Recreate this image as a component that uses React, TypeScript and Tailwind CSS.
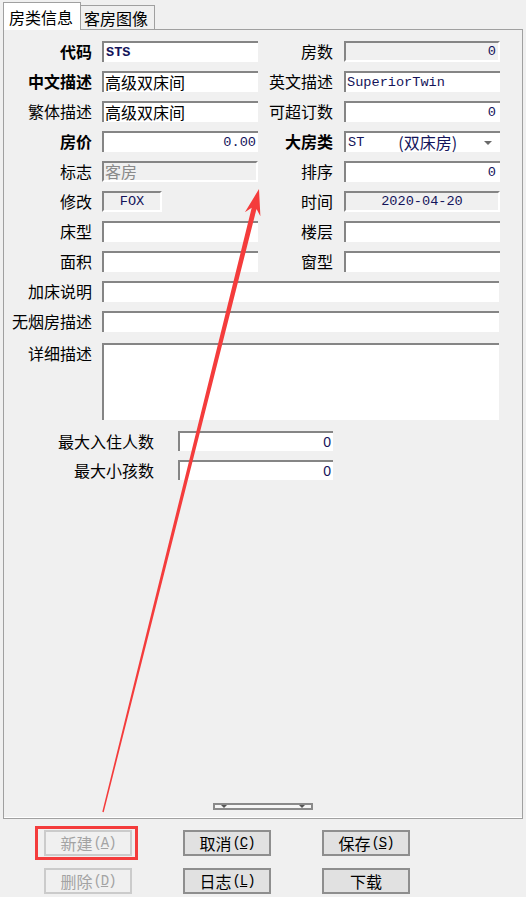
import React from "react";

const cjk = "font-['Noto_Sans_CJK_SC','Noto_Sans',sans-serif]";
const mono = "font-['Liberation_Mono','Noto_Sans_CJK_SC',monospace] text-[13.6px] text-[#14145a]";

type BoxProps = { className?: string; muted?: boolean; children?: React.ReactNode };

function Box({ className = "", muted, children }: BoxProps) {
  return (
    <div
      className={
        "flex shrink-0 items-center border-t-2 border-l-2 border-t-[#858585] border-l-[#858585] leading-[17px] " +
        (muted ? "border-r-2 border-b-2 border-r-white border-b-white bg-[#f0f0f0] " : "bg-white ") +
        className
      }
    >
      {children}
    </div>
  );
}

type LabelProps = { className?: string; bold?: boolean; children: React.ReactNode };

function Label({ className = "", bold, children }: LabelProps) {
  return (
    <div className={"shrink-0 text-right text-[16px] leading-[21px] text-black " + (bold ? "font-bold " : "") + className}>
      {children}
    </div>
  );
}

type BtnProps = { label: string; hot?: string; disabled?: boolean };

function Btn({ label, hot, disabled }: BtnProps) {
  return (
    <div
      className={
        "flex h-[26px] w-[88px] items-center justify-center border-2 text-[16px] leading-none " +
        (disabled ? "border-[#cbcbcb] bg-[#f0f0f0] text-[#a3a3a3]" : "border-[#8e8e8e] bg-[#e1e1e1] text-black")
      }
    >
      <span>{label}</span>
      {hot && (
        <span className="ml-[1px] font-['Liberation_Mono',monospace] text-[14px] tracking-[-1px]">
          (<u>{hot}</u>)
        </span>
      )}
    </div>
  );
}

export default function App() {
  return (
    <div className={"relative flex h-[897px] w-[526px] flex-col overflow-hidden bg-[#f0f0f0] px-[3px] " + cjk}>
      {/* tabs */}
      <div className="flex h-[29px] shrink-0 items-end">
        <div className="relative z-10 -mb-px flex h-[28px] w-[78px] items-center border-x border-t border-[#a0a0a0] bg-white pl-[5px] text-[16px]">
          房类信息
        </div>
        <div className="flex h-[24px] w-[74px] items-center border-t border-r border-[#a0a0a0] bg-[#f0f0f0] pl-[3px] text-[16px]">
          客房图像
        </div>
      </div>

      {/* panel */}
      <div className="flex w-[520px] flex-1 flex-col border border-[#a0a0a0]">
        <div className="flex flex-1 flex-col border-b border-white">
          <div className="flex flex-col gap-[9px] pt-[11px]">
            <div className="flex h-[21px] items-center">
              <Label bold className="w-[88px]">代码</Label>
              <Box className="ml-[10px] h-full w-[156px] pl-[2px]">
                <span className={mono + " font-bold"}>STS</span>
              </Box>
              <Label className="w-[75px]">房数</Label>
              <Box muted className="ml-[11px] h-full w-[156px] justify-end pr-[2px]">
                <span className={mono}>0</span>
              </Box>
            </div>

            <div className="flex h-[21px] items-center">
              <Label bold className="w-[88px]">中文描述</Label>
              <Box className="ml-[10px] h-full w-[156px] pl-[1px] text-[16px]">高级双床间</Box>
              <Label className="w-[75px]">英文描述</Label>
              <Box className="ml-[11px] h-full w-[156px] pl-[1px]">
                <span className={mono}>SuperiorTwin</span>
              </Box>
            </div>

            <div className="flex h-[21px] items-center">
              <Label className="w-[88px]">繁体描述</Label>
              <Box className="ml-[10px] h-full w-[156px] pl-[1px] text-[16px]">高级双床间</Box>
              <Label className="w-[75px]">可超订数</Label>
              <Box className="ml-[11px] h-full w-[156px] justify-end pr-[4px]">
                <span className={mono}>0</span>
              </Box>
            </div>

            <div className="flex h-[21px] items-center">
              <Label bold className="w-[88px]">房价</Label>
              <Box className="ml-[10px] h-full w-[156px] justify-end pr-[2px]">
                <span className={mono}>0.00</span>
              </Box>
              <Label bold className="w-[75px]">大房类</Label>
              <Box className="ml-[11px] h-full w-[156px] pl-[2px] pr-[8px]">
                <span className={mono}>ST</span>
                <span className="ml-[34px] text-[16px] text-[#14145a]">(双床房)</span>
                <span className="ml-auto h-0 w-0 border-x-[4px] border-t-[4px] border-x-transparent border-t-[#6a6a6a]" />
              </Box>
            </div>

            <div className="flex h-[21px] items-center">
              <Label className="w-[88px]">标志</Label>
              <Box muted className="ml-[10px] h-full w-[156px] pl-[1px] text-[16px] text-[#8a8a8a]">客房</Box>
              <Label className="w-[75px]">排序</Label>
              <Box className="ml-[11px] h-full w-[156px] justify-end pr-[4px]">
                <span className={mono}>0</span>
              </Box>
            </div>

            <div className="flex h-[21px] items-center">
              <Label className="w-[88px]">修改</Label>
              <Box muted className="ml-[10px] h-full w-[60px] justify-center">
                <span className={mono}>FOX</span>
              </Box>
              <Label className="ml-[96px] w-[75px]">时间</Label>
              <Box muted className="ml-[11px] h-full w-[156px] justify-center">
                <span className={mono}>2020-04-20</span>
              </Box>
            </div>

            <div className="flex h-[21px] items-center">
              <Label className="w-[88px]">床型</Label>
              <Box className="ml-[10px] h-full w-[156px]" />
              <Label className="w-[75px]">楼层</Label>
              <Box className="ml-[11px] h-full w-[156px]" />
            </div>

            <div className="flex h-[21px] items-center">
              <Label className="w-[88px]">面积</Label>
              <Box className="ml-[10px] h-full w-[156px]" />
              <Label className="w-[75px]">窗型</Label>
              <Box className="ml-[11px] h-full w-[156px]" />
            </div>

            <div className="flex h-[21px] items-center">
              <Label className="w-[88px]">加床说明</Label>
              <Box className="ml-[10px] h-full w-[397px]" />
            </div>

            <div className="flex h-[21px] items-center">
              <Label className="w-[88px]">无烟房描述</Label>
              <Box className="ml-[10px] h-full w-[397px]" />
            </div>

            <div className="mt-[2px] flex h-[77px] items-start">
              <Label className="w-[88px]">详细描述</Label>
              <Box className="ml-[10px] h-full w-[397px]" />
            </div>

            <div className="mt-[2px] flex h-[20px] items-center">
              <Label className="w-[150px]">最大入住人数</Label>
              <Box className="ml-[24px] h-full w-[155px] justify-end pr-[2px]">
                <span className="font-['Liberation_Sans',sans-serif] text-[14px] text-[#14145a]">0</span>
              </Box>
            </div>

            <div className="flex h-[20px] items-center">
              <Label className="w-[150px]">最大小孩数</Label>
              <Box className="ml-[24px] h-full w-[155px] justify-end pr-[2px]">
                <span className="font-['Liberation_Sans',sans-serif] text-[14px] text-[#14145a]">0</span>
              </Box>
            </div>
          </div>

          {/* splitter grip */}
          <div className="mx-auto mt-auto mb-[7px] flex h-[7px] w-[100px] items-start justify-between border-2 border-[#8a8a8a] bg-[#f6f6f6] px-[6px]">
            <span className="h-0 w-0 border-x-[3px] border-t-[3px] border-x-transparent border-t-[#555]" />
            <span className="h-0 w-0 border-x-[3px] border-t-[3px] border-x-transparent border-t-[#555]" />
          </div>
        </div>
      </div>

      {/* buttons */}
      <div className="flex shrink-0 flex-col gap-[12px] pt-[11px] pb-[3px] pl-[41px]">
        <div className="flex gap-[51px]">
          <Btn label="新建" hot="A" disabled />
          <Btn label="取消" hot="C" />
          <Btn label="保存" hot="S" />
        </div>
        <div className="flex gap-[51px]">
          <Btn label="删除" hot="D" disabled />
          <Btn label="日志" hot="L" />
          <Btn label="下载" />
        </div>
      </div>

      {/* annotation */}
      <svg className="pointer-events-none absolute inset-0" width="526" height="897" viewBox="0 0 526 897">
        <polygon
          points="102.3,811.8 103.7,812.2 256.5,209 260.4,216.2 259,189 244.9,212.3 251.7,207.8"
          fill="#f43c3c"
        />
        <rect x="36.5" y="827.5" width="100" height="31" fill="none" stroke="#f43c3c" strokeWidth="3" />
      </svg>
    </div>
  );
}
